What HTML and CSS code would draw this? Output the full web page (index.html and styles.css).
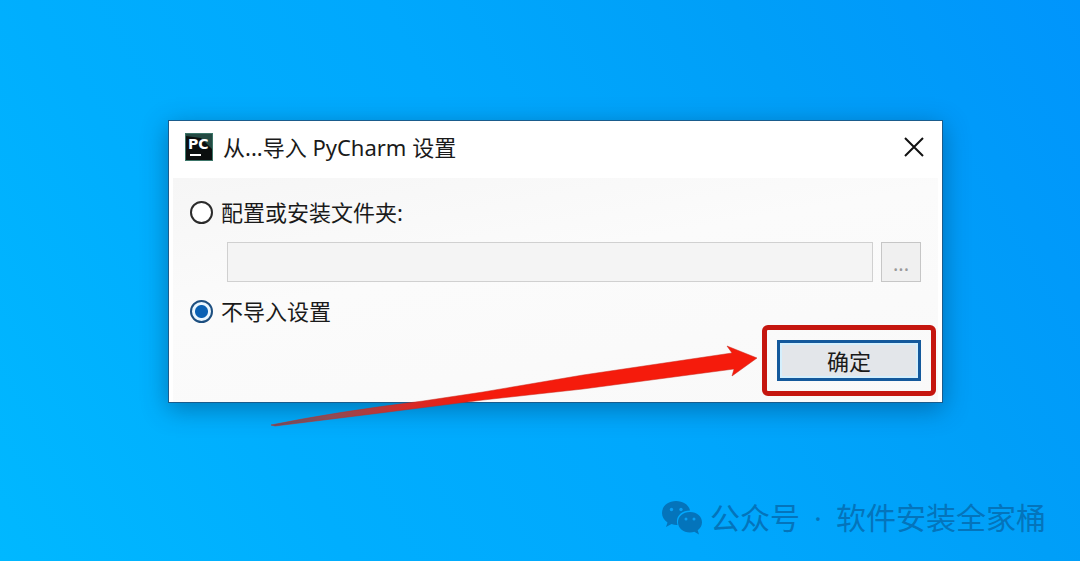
FILE: index.html
```html
<!DOCTYPE html>
<html lang="zh-CN">
<head>
<meta charset="utf-8">
<title>PyCharm</title>
<link rel="stylesheet" href="styles.css">
</head>
<body>
<main class="desktop">
  <section class="dialog" role="dialog" aria-labelledby="dialog-title">
    <header class="titlebar">
      <svg class="app-icon" viewBox="0 0 28 28" aria-hidden="true">
        <rect width="28" height="28" fill="#3c7568"/>
        <rect x="1" y="1" width="26" height="26" fill="#0b0f0f"/>
        <path d="M1 1H27V16L16 5L1 3Z" fill="#244a43"/>
        <text class="app-icon-text" x="3" y="16">PC</text>
        <rect x="5" y="21" width="11" height="2" fill="#fff"/>
      </svg>
      <h1 class="title" id="dialog-title">从...导入 PyCharm 设置</h1>
      <button class="close" type="button" aria-label="关闭">
        <svg class="close-icon" viewBox="0 0 20 20" aria-hidden="true"><path d="M1 1 19 19M19 1 1 19"/></svg>
      </button>
    </header>
    <form class="content">
      <label class="option"><input class="radio" type="radio" name="source">配置或安装文件夹:</label>
      <div class="folder-row">
        <input class="folder" type="text" aria-label="配置或安装文件夹" disabled>
        <button class="browse" type="button" disabled>...</button>
      </div>
      <label class="option"><input class="radio" type="radio" name="source" checked>不导入设置</label>
      <div class="actions">
        <div class="confirm">
          <button class="ok" type="button">确定</button>
          <svg class="arrow" viewBox="0 0 488 82" aria-hidden="true">
            <defs>
              <linearGradient id="arrow-fill">
                <stop offset="0" stop-color="#654f64"/>
                <stop offset=".12" stop-color="#8c4c56"/>
                <stop offset=".28" stop-color="#d52b27"/>
                <stop offset=".42" stop-color="#f51b0c"/>
                <stop offset="1" stop-color="#f51b0c"/>
              </linearGradient>
            </defs>
            <path fill="url(#arrow-fill)" stroke="#c9281c" stroke-opacity=".5" d="M1 80 Q65 67 153 56 L213 47 L313 30 L462 8 L457 1 L487 13 L462 31 L464 24 L313 44 L213 55 L110 68 L5 81 Z"/>
          </svg>
        </div>
      </div>
    </form>
  </section>
  <footer class="watermark">
    <svg class="chat-icon" viewBox="0 0 40 34" aria-hidden="true">
      <path fill="currentColor" d="M14 0C6 0 0 5 0 12c0 4 2 7 5.500 9.500L4 26l5.500-3c2 .7 4 1 6 .9C13 16 19 9.500 28 9.500 27 4 21 0 14 0Z"/>
      <path fill="currentColor" d="M28 11c-7 0-12 4.500-12 10.300S21 31.500 28 31.500c1.500 0 3-.2 4.300-.7L37 33.500l-1.300-4.200C38.500 27.300 40 24.500 40 21.300 40 15.500 35 11 28 11Z"/>
      <g fill="#0aa0f5"><circle cx="9.500" cy="8.500" r="1.700"/><circle cx="19" cy="8.500" r="1.700"/><circle cx="24" cy="18" r="1.500"/><circle cx="32" cy="18" r="1.500"/></g>
    </svg>
    <span class="account"><span>公众号</span><span>·</span><span>软件安装全家桶</span></span>
  </footer>
</main>
</body>
</html>
```

FILE: styles.css
```css
* { box-sizing: border-box; }

body {
  margin: 0;
  font-family: "Noto Sans", "Noto Sans CJK SC", sans-serif;
  font-size: 22px;
  line-height: 32px;
  color: #1a1a1a;
}

button, input { font: inherit; color: inherit; margin: 0; }

.desktop {
  display: flex;
  flex-direction: column;
  justify-content: space-between;
  min-height: 100vh;
  padding: 120px 34px 26px 168px;
  background: linear-gradient(60deg, #00b8ff 0%, #00aefe 25%, #00a8fd 50%, #009ff8 75%, #0095fc 100%);
}

.dialog {
  margin-right: 103px;
  border: 1px solid #1a5c8c;
  background: #fff;
  box-shadow: 0 6px 24px rgba(0, 50, 90, .45);
}

.titlebar {
  display: flex;
  align-items: center;
  gap: 10px;
  height: 57px;
  padding: 0 18px 6px 16px;
}

.app-icon { width: 28px; height: 28px; }

.app-icon-text {
  font: 700 14px "DejaVu Sans", sans-serif;
  fill: #fff;
}

.title {
  flex: 1;
  margin: 0;
  font-size: 22px;
  font-weight: 400;
}

.close {
  display: flex;
  padding: 0;
  border: 0;
  background: none;
}

.close-icon {
  width: 20px;
  height: 20px;
  fill: none;
  stroke: #111;
  stroke-width: 2;
}

.content {
  display: flex;
  flex-direction: column;
  margin: 0 4px;
  padding: 18px 17px 21px 17px;
  background: linear-gradient(170deg, #f6f6f6, #fbfbfb 40%, #f9f9f9);
}

.option {
  display: flex;
  align-items: center;
  gap: 8px;
}

.radio {
  appearance: none;
  width: 23px;
  height: 23px;
  border: 2px solid #2b2b2b;
  border-radius: 50%;
  background: #fff;
}

.radio:checked {
  border-color: #1d4f80;
  background: radial-gradient(circle, #0a61b4 6px, #eaf7ff 7px);
}

.folder-row {
  display: flex;
  gap: 8px;
  margin: 14px 0 13px 37px;
}

.folder {
  flex: 1;
  min-width: 0;
  height: 40px;
  border: 1px solid #d0d0d0;
  background: #f4f4f4;
}

.browse {
  width: 40px;
  height: 40px;
  padding: 4px 0 0;
  border: 1px solid #c6c6c6;
  background: #f0f0f0;
  color: #999;
  font-size: 20px;
}

.actions {
  display: flex;
  justify-content: flex-end;
  margin-top: 13px;
}

.confirm { position: relative; }

.confirm::before {
  content: "";
  position: absolute;
  inset: -15px;
  border: 5px solid #c5160f;
  border-radius: 6px;
}

.ok {
  position: relative;
  display: block;
  width: 144px;
  height: 41px;
  padding: 0;
  border: 3px solid #14599c;
  background: #e3e6ea;
  box-shadow: inset 0 0 0 2px #d4effd;
  line-height: 30px;
}

.arrow {
  position: absolute;
  top: 5px;
  right: calc(100% + 19px);
  width: 488px;
  height: 82px;
}

.watermark {
  display: flex;
  align-items: center;
  justify-content: flex-end;
  gap: 8px;
  color: #0474bb;
  font-family: "Open Sans", "Noto Sans CJK SC", sans-serif;
  font-size: 30px;
}

.account {
  display: flex;
  gap: 14px;
}

.chat-icon { width: 40px; height: 34px; }
```
